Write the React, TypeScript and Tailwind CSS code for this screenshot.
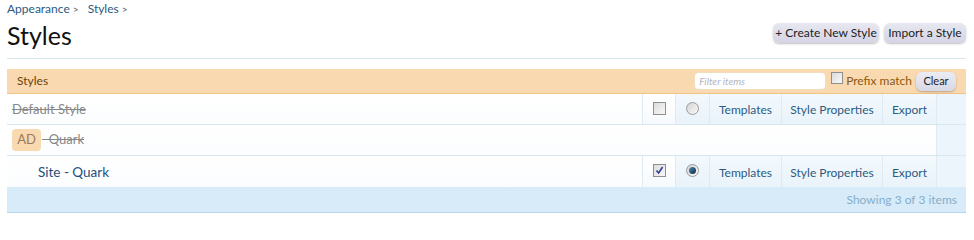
import React from "react";

const font = { fontFamily: "Lato, 'Open Sans', sans-serif" };

function Checkbox({ checked }: { checked?: boolean }) {
  return (
    <span className="flex h-[13px] w-[13px] items-center justify-center border border-[#8f8f8f] bg-gradient-to-br from-[#dcdcdc] to-[#f8f8f8]">
      {checked && (
        <svg width="9" height="9" viewBox="0 0 9 9">
          <path d="M1.5 4.5 L3.6 7 L7.6 1" fill="none" stroke="#2d3f9a" strokeWidth="1.6" />
        </svg>
      )}
    </span>
  );
}

function Radio({ checked }: { checked?: boolean }) {
  return (
    <span className="flex h-[13px] w-[13px] items-center justify-center rounded-full border border-[#9a9a9a] bg-gradient-to-br from-[#d4d4d4] to-[#fafafa]">
      {checked && <span className="h-[7px] w-[7px] rounded-full bg-gradient-to-br from-[#4e8fb8] to-[#0d2c48]" />}
    </span>
  );
}

function ActionCells({ checked }: { checked?: boolean }) {
  return (
    <>
      <div className="flex w-[33px] items-center justify-center border-l border-[#dfeaf2] bg-gradient-to-b from-white to-[#f6fafd] pb-[2px]">
        <Checkbox checked={checked} />
      </div>
      <div className="flex w-[34px] items-center justify-center border-l border-[#dfeaf2] bg-gradient-to-b from-[#f3f9fd] to-[#e9f3fa] pb-[2px]">
        <Radio checked={checked} />
      </div>
      <a className="flex w-[72px] items-center justify-center border-l border-[#dfeaf2] bg-gradient-to-b from-[#f3f9fd] to-[#e9f3fa] pt-[2px] text-[12px] text-[#2c5b81]">
        Templates
      </a>
      <a className="flex w-[101px] items-center justify-center border-l border-[#dfeaf2] bg-gradient-to-b from-[#f3f9fd] to-[#e9f3fa] pt-[2px] text-[12px] text-[#2c5b81]">
        Style Properties
      </a>
      <a className="flex w-[54px] items-center justify-center border-l border-[#dfeaf2] bg-gradient-to-b from-[#f3f9fd] to-[#e9f3fa] pt-[2px] text-[12px] text-[#2c5b81]">
        Export
      </a>
    </>
  );
}

function LastCell() {
  return <div className="w-[30px] border-l border-[#dfeaf2] bg-[#ebf5fb]" />;
}

export default function App() {
  return (
    <div className="h-[220px] w-[974px] bg-white pl-[7px] pr-[8px] text-[#222]" style={font}>
      <div className="flex h-[18px] items-start gap-[9px] pt-[2px] text-[12px] leading-[14px] text-[#2b5a80]">
        <span>
          Appearance <span className="text-[10px] text-[#555]">&gt;</span>
        </span>
        <span>
          Styles <span className="text-[10px] text-[#555]">&gt;</span>
        </span>
      </div>

      <div className="flex h-[41px] items-start justify-between border-b border-[#d7e7ef]">
        <h1 className="mt-[2px] text-[25px] leading-[30px] text-[#111]">Styles</h1>
        <div className="mt-[5px] flex gap-[5px]">
          <button className="h-[20px] w-[106px] rounded-[6px] bg-gradient-to-b from-[#e8e8f2] to-[#d4d4e4] text-[12px] text-[#222] shadow-[0_1px_2px_rgba(0,0,0,0.25)]">
            + Create New Style
          </button>
          <button className="h-[20px] w-[82px] rounded-[6px] bg-gradient-to-b from-[#e8e8f2] to-[#d4d4e4] text-[12px] text-[#222] shadow-[0_1px_2px_rgba(0,0,0,0.25)]">
            Import a Style
          </button>
        </div>
      </div>

      <div className="mt-[10px]">
        <div className="flex h-[25px] items-center justify-between border-b border-[#f0c488] bg-[#f9d9b0] pl-[10px] pr-[10px]">
          <span className="text-[12px] text-[#6b3f0a]">Styles</span>
          <div className="flex items-center">
            <div className="flex h-[18px] w-[132px] items-center rounded-[4px] border border-[#f3dcbc] bg-white pl-[4px] text-[10px] italic text-[#b4b4bc]">
              Filter items
            </div>
            <span className="ml-[5px] h-[12px] w-[12px] self-start border border-[#8f8f8f] bg-gradient-to-br from-[#dcdcdc] to-[#f8f8f8]" />
            <span className="ml-[3px] text-[12px] text-[#8a5a12]">Prefix match</span>
            <button className="ml-[4px] h-[19px] w-[40px] rounded-[6px] bg-gradient-to-b from-[#ececf4] to-[#d8d8e6] text-[11px] text-[#222] shadow-[0_1px_2px_rgba(0,0,0,0.25)]">
              Clear
            </button>
          </div>
        </div>

        <div className="flex h-[31px] border-b border-[#d9e7f1] bg-gradient-to-b from-white to-[#fbfdfe]">
          <div className="flex flex-1 items-center pl-[5px] pt-[2px] text-[13px] text-[#888] line-through">Default Style</div>
          <ActionCells />
          <LastCell />
        </div>

        <div className="flex h-[31px] border-b border-[#d9e7f1] bg-gradient-to-b from-white to-[#fbfdfe]">
          <div className="flex flex-1 items-center pl-[5px] text-[13px] text-[#888]">
            <span className="flex h-[22px] w-[29px] items-center justify-center rounded-[4px] bg-[#f9d9b0] text-[#9a7a5a]">AD</span>
            <span className="ml-[1px] whitespace-pre line-through">{"  Quark"}</span>
          </div>
          <LastCell />
        </div>

        <div className="flex h-[31px] bg-gradient-to-b from-white to-[#fbfdfe]">
          <div className="flex flex-1 items-center pl-[31px] pt-[2px] text-[13.5px] text-[#23507a]">Site - Quark</div>
          <ActionCells checked />
          <LastCell />
        </div>

        <div className="flex h-[26px] items-center justify-end border-b border-[#b9d4e8] bg-[#d7ecf8] pr-[9px] text-[12px] text-[#86aecb]">
          Showing 3 of 3 items
        </div>
      </div>
    </div>
  );
}
